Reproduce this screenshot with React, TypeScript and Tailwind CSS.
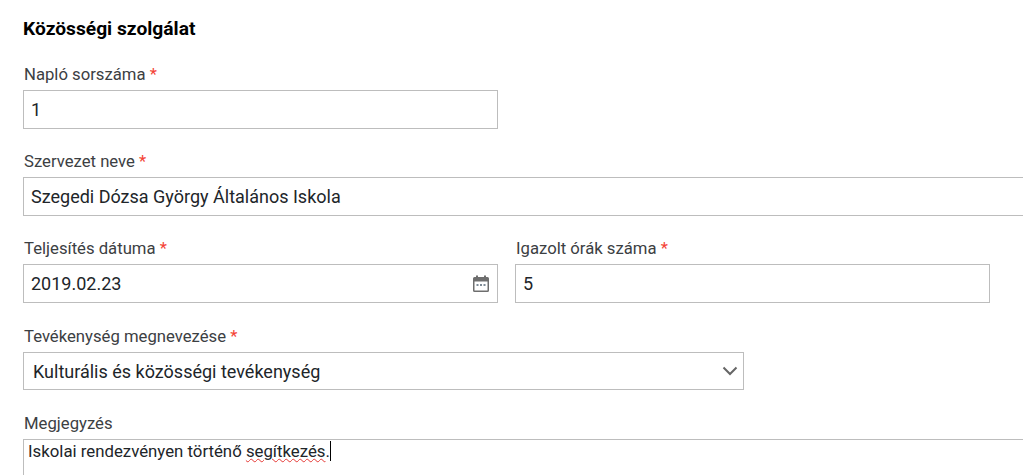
const boxClass = "border border-[#bdbdbd] bg-white flex items-center text-[18px] text-[#212529]";

function Label({ text, required }: { text: string; required?: boolean }) {
  return (
    <div className="mb-[4px] h-[24px] pl-px pt-px text-[16.7px] leading-[24px] text-[#3c4043]">
      {text}
      {required && <span className="text-[#f44336]"> *</span>}
    </div>
  );
}

function CalendarIcon() {
  return (
    <svg width="18" height="18" viewBox="0 0 18 18" className="shrink-0">
      <rect x="4" y="0.5" width="2" height="3" fill="#6e6e6e" />
      <rect x="12" y="0.5" width="2" height="3" fill="#6e6e6e" />
      <path d="M2.500 2h13A1.500 1.500 0 0 1 17 3.500v12a1.500 1.500 0 0 1-1.500 1.500h-13A1.500 1.500 0 0 1 1 15.500v-12A1.500 1.500 0 0 1 2.500 2z" fill="#6e6e6e" />
      <rect x="2.500" y="6.500" width="13" height="9" fill="#fff" />
      <rect x="4.500" y="9" width="2" height="2" fill="#7d8a96" />
      <rect x="8" y="9" width="2" height="2" fill="#7d8a96" />
      <rect x="11.500" y="9" width="2" height="2" fill="#7d8a96" />
    </svg>
  );
}

export default function App() {
  return (
    <div className="h-[475px] w-[1023px] overflow-hidden bg-white font-['Roboto',sans-serif]">
      <div className="w-[1100px] pl-[23px] pt-[17px]">
        <h2 className="h-[23px] text-[19.2px] font-bold leading-[23px] text-black">Közösségi szolgálat</h2>

        <div className="mt-[22px]">
          <Label text="Napló sorszáma" required />
          <div className={`${boxClass} h-[39px] w-[475px] pl-[7px]`}>1</div>
        </div>

        <div className="mt-[20px]">
          <Label text="Szervezet neve" required />
          <div className={`${boxClass} h-[39px] w-full pl-[7px]`}>Szegedi Dózsa György Általános Iskola</div>
        </div>

        <div className="mt-[20px] flex gap-[17px]">
          <div>
            <Label text="Teljesítés dátuma" required />
            <div className={`${boxClass} h-[39px] w-[475px] justify-between pl-[7px] pr-[7px]`}>
              2019.02.23
              <CalendarIcon />
            </div>
          </div>
          <div>
            <Label text="Igazolt órák száma" required />
            <div className={`${boxClass} h-[39px] w-[475px] pl-[7px]`}>5</div>
          </div>
        </div>

        <div className="mt-[21px]">
          <Label text="Tevékenység megnevezése" required />
          <div className={`${boxClass} h-[38px] w-[721px] justify-between pl-[9px] pr-[5px]`}>
            Kulturális és közösségi tevékenység
            <svg width="16" height="10" viewBox="0 0 16 10" className="shrink-0">
              <path d="M1.500 1.500L8 8l6.500-6.500" fill="none" stroke="#666" strokeWidth="2" />
            </svg>
          </div>
        </div>

        <div className="mt-[21px]">
          <Label text="Megjegyzés" />
          <div className="h-[60px] w-full border border-[#bdbdbd] pl-[4px] text-[16.8px] leading-[23px] text-[#212529]">
            Iskolai rendezvényen történő{" "}
            <span className="underline decoration-wavy decoration-[#e53935] decoration-1">segítkezés</span>.
            <span className="inline-block h-[20px] w-px bg-black align-[-4px]" />
          </div>
        </div>
      </div>
    </div>
  );
}
